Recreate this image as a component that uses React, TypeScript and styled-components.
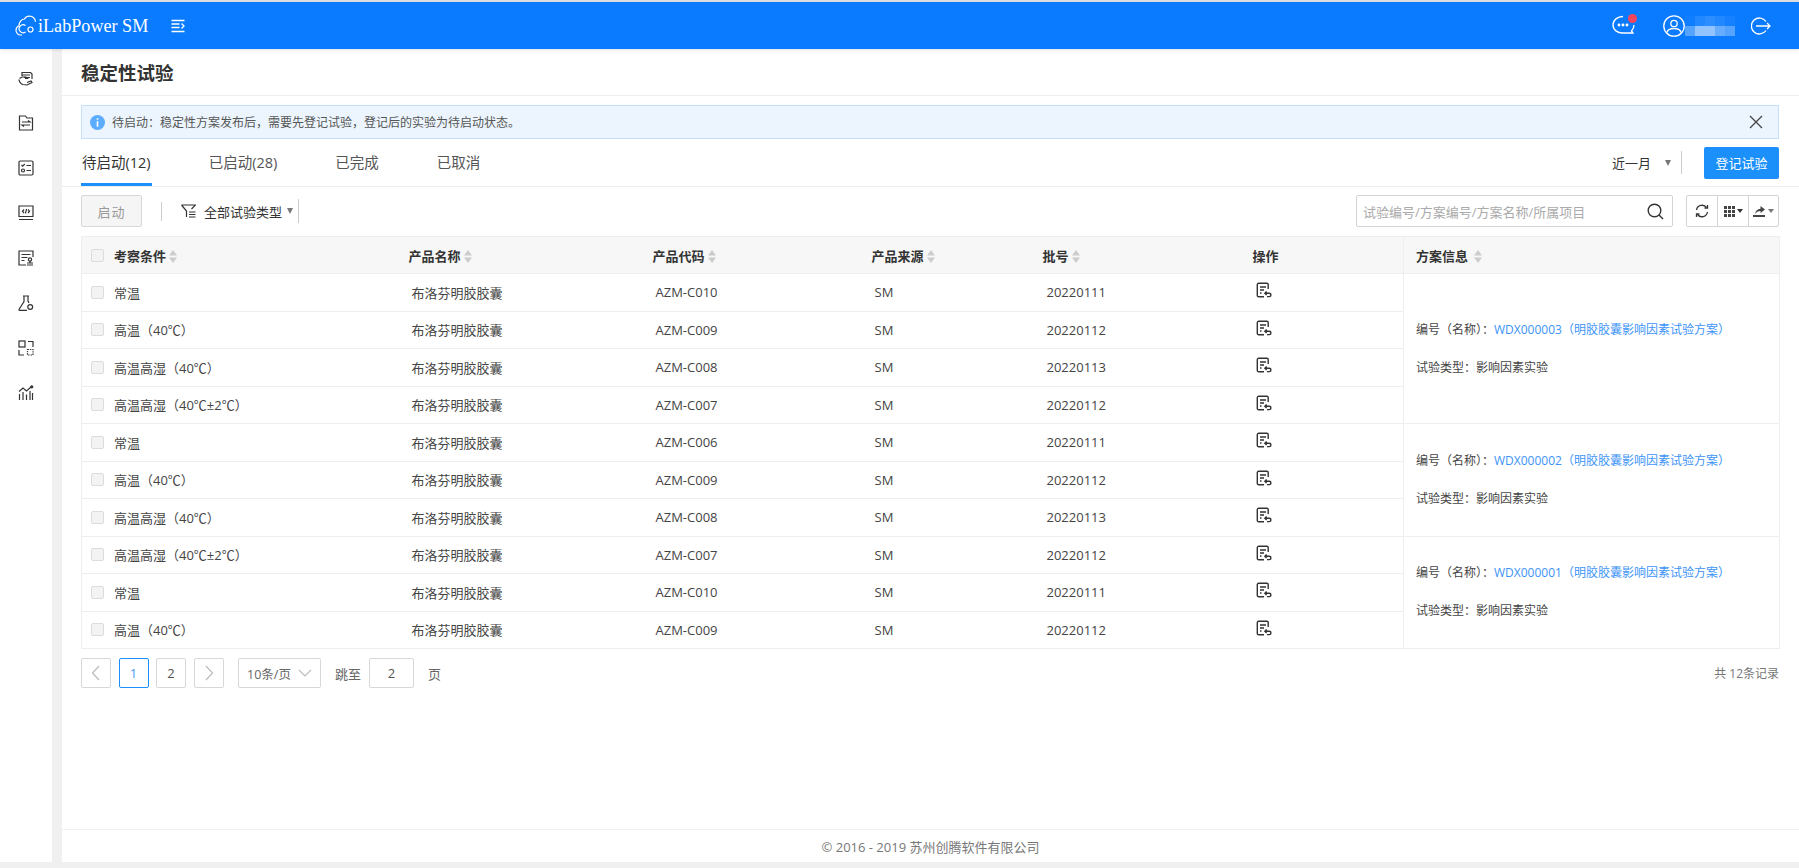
import { createGlobalStyle, styled } from 'styled-components';

const FONT = '"Open Sans", "Noto Sans CJK SC", sans-serif';

const GlobalStyle = createGlobalStyle`
  html, body {
    margin: 0;
    height: 100%;
    overflow: hidden;
  }
  body {
    font-family: ${FONT};
    font-size: 13px;
    color: #333;
    background: #f0f0f0;
  }
  * { box-sizing: border-box; }
`;

const Page = styled.div`
  height: 100vh;
  display: flex;
  flex-direction: column;
  padding-bottom: 6px;
`;

const Header = styled.header`
  flex: none;
  height: 49px;
  border-top: 2px solid #dedede;
  background: #0a7bff;
  display: flex;
  align-items: center;
  color: #fff;
  box-shadow: 0 1px 3px rgba(0, 0, 0, 0.12);
  z-index: 1;
`;

const Logo = styled.div`
  display: flex;
  align-items: center;
  margin-left: 15px;
  width: 156px;
`;

const LogoText = styled.span`
  font-family: "Liberation Serif", serif;
  font-size: 19.5px;
  line-height: 24px;
  margin-left: -1px;
  transform: scaleX(0.93);
  transform-origin: left center;
  white-space: nowrap;
`;

const HeaderRight = styled.div`
  margin-left: auto;
  display: flex;
  align-items: center;
  padding-right: 28px;
`;

const ChatWrap = styled.div`
  position: relative;
  width: 23px;
  height: 21px;
  margin-right: 28px;
`;

const RedDot = styled.span`
  position: absolute;
  top: -1px;
  right: -2px;
  width: 9px;
  height: 9px;
  border-radius: 50%;
  background: #f5455c;
`;

const NameBlur = styled.div`
  display: grid;
  grid-template-columns: repeat(5, 10px);
  grid-template-rows: 10px 10px;
  margin-right: 16px;
`;

const Blur = styled.span<{ $alpha: number }>`
  background: rgba(255, 255, 255, ${(p) => p.$alpha});
`;

const Main = styled.div`
  flex: 1;
  min-height: 0;
  display: flex;
`;

const Sidebar = styled.nav`
  flex: none;
  width: 52px;
  background: #fff;
  padding-top: 21px;
  display: flex;
  flex-direction: column;
  align-items: center;
  gap: 29px;
`;

const Content = styled.main`
  flex: 1;
  min-width: 0;
  margin-left: 10px;
  background: #fff;
  display: flex;
  flex-direction: column;
`;

const TitleBar = styled.div`
  flex: none;
  height: 47px;
  padding-left: 19px;
  display: flex;
  align-items: center;
  border-bottom: 1px solid #eee;
`;

const Title = styled.h1`
  margin: 0;
  font-size: 18.5px;
  font-weight: 700;
  color: #333;
`;

const Alert = styled.div`
  flex: none;
  height: 34px;
  margin: 9px 20px 0 19px;
  padding: 0 15px 0 8px;
  background: #ecf5fe;
  border: 1px solid #c3e1fb;
  display: flex;
  align-items: center;
  gap: 7px;
  font-size: 12px;
  color: #555;
`;

const CloseBox = styled.span`
  margin-left: auto;
  display: flex;
`;

const TabBar = styled.div`
  flex: none;
  height: 48px;
  padding: 0 20px 0 19px;
  border-bottom: 1px solid #eee;
  display: flex;
`;

const Tab = styled.div<{ $active?: boolean }>`
  height: 47px;
  margin-right: 56px;
  padding: 0 1px;
  display: flex;
  align-items: center;
  font-size: 14.5px;
  color: ${(p) => (p.$active ? '#333' : '#555')};
  border-bottom: 3px solid ${(p) => (p.$active ? '#1b8ffa' : 'transparent')};
`;

const TabRight = styled.div`
  margin-left: auto;
  display: flex;
  align-items: center;
`;

const RangeSelect = styled.div`
  display: flex;
  align-items: center;
  height: 23px;
  padding-right: 10px;
  border-right: 1px solid #ccc;
  margin-right: 22px;
  gap: 14px;
`;

const Caret = styled.i`
  display: inline-block;
  width: 0;
  height: 0;
  border-left: 3.5px solid transparent;
  border-right: 3.5px solid transparent;
  border-top: 6px solid #777;
`;

const PrimaryButton = styled.button`
  width: 75px;
  height: 32px;
  border: 0;
  border-radius: 2px;
  background: #1b8ffa;
  color: #fff;
  font: 13px ${FONT};
  padding: 0;
`;

const Section = styled.section`
  flex: 1;
  padding: 0 20px 0 19px;
`;

const Toolbar = styled.div`
  height: 32px;
  margin: 8px 0 9px;
  display: flex;
  align-items: center;
`;

const DisabledButton = styled.button`
  width: 61px;
  height: 32px;
  border: 1px solid #d8d8d8;
  border-radius: 2px;
  background: #f5f5f5;
  color: #999;
  font: 13px ${FONT};
  letter-spacing: 1px;
  padding: 0;
`;

const Divider = styled.span`
  width: 1px;
  height: 19px;
  background: #ccc;
  margin: 0 19px;
`;

const FilterSelect = styled.div`
  display: flex;
  align-items: center;
  height: 24px;
  border-right: 1px solid #ccc;
  padding-right: 5px;
`;

const FilterLabel = styled.span`
  margin: 0 5px 0 8px;
`;

const SearchBox = styled.div`
  margin-left: auto;
  width: 317px;
  height: 32px;
  border: 1px solid #d4d4d4;
  border-radius: 2px;
  display: flex;
  align-items: center;
  justify-content: space-between;
  padding: 0 8px 0 6px;
  color: #aaa;
`;

const ToolGroup = styled.div`
  margin-left: 13px;
  width: 93px;
  height: 32px;
  border: 1px solid #d4d4d4;
  border-radius: 2px;
  display: flex;
`;

const ToolButton = styled.div<{ $w: number }>`
  width: ${(p) => p.$w}px;
  display: flex;
  align-items: center;
  justify-content: center;
  gap: 2px;
  & + & { border-left: 1px solid #d4d4d4; }
`;

const SmallCaret = styled.i<{ $dark?: boolean }>`
  display: inline-block;
  width: 0;
  height: 0;
  border-left: 3px solid transparent;
  border-right: 3px solid transparent;
  border-top: 4px solid ${(p) => (p.$dark ? '#333' : '#777')};
`;

const Table = styled.table`
  width: 1698px;
  table-layout: fixed;
  border-collapse: collapse;
  border: 1px solid #eee;
`;

const Th = styled.th<{ $w: number; $pad?: number }>`
  width: ${(p) => p.$w}px;
  height: 37px;
  padding: 0 0 0 ${(p) => p.$pad ?? 3}px;
  background: #f7f7f7;
  border-bottom: 1px solid #eee;
  text-align: left;
  font-size: 13px;
  font-weight: 700;
  color: #333;
  white-space: nowrap;
`;

const InfoTh = styled(Th)`
  border-left: 1px solid #eee;
  padding-left: 12px;
`;

const Tr = styled.tr`
  height: 37.5px;
`;

const Td = styled.td<{ $pad?: number }>`
  padding: 0 0 0 ${(p) => p.$pad ?? 6}px;
  border-bottom: 1px solid #eee;
  white-space: nowrap;
  color: #444;
`;

const InfoCell = styled.td`
  padding: 0 0 0 12px;
  border-left: 1px solid #eee;
  border-bottom: 1px solid #eee;
  font-size: 12px;
  color: #444;
  vertical-align: middle;
`;

const InfoLine = styled.div`
  line-height: 20px;
  & + & { margin-top: 18px; }
`;

const InfoLink = styled.span`
  color: #3c93f7;
`;

const CheckCell = styled.div`
  display: flex;
  align-items: center;
  gap: 10px;
  padding-left: 9px;
`;

const Check = styled.span`
  flex: none;
  width: 13px;
  height: 13px;
  border: 1px solid #dcdcdc;
  border-radius: 2px;
  background: #f3f3f3;
`;

const SortMark = styled.svg`
  margin-left: 3px;
  vertical-align: -2px;
`;

const Pager = styled.div`
  height: 30px;
  margin-top: 9px;
  display: flex;
  align-items: center;
`;

const PageBtn = styled.div<{ $active?: boolean }>`
  width: 30px;
  height: 30px;
  margin-right: 7.5px;
  border: 1px solid ${(p) => (p.$active ? '#1b8ffa' : '#d8d8d8')};
  border-radius: 2px;
  color: ${(p) => (p.$active ? '#4a9bf5' : '#555')};
  display: flex;
  align-items: center;
  justify-content: center;
`;

const PageSize = styled.div`
  width: 83px;
  height: 30px;
  margin-left: 7px;
  padding: 0 8px;
  border: 1px solid #d8d8d8;
  border-radius: 2px;
  color: #666;
  display: flex;
  align-items: center;
  justify-content: space-between;
  font-size: 12.5px;
`;

const JumpLabel = styled.span`
  margin: 0 8px 0 14px;
  color: #666;
`;

const JumpInput = styled.div`
  width: 45px;
  height: 30px;
  border: 1px solid #d8d8d8;
  border-radius: 2px;
  display: flex;
  align-items: center;
  justify-content: center;
  color: #555;
`;

const Total = styled.span`
  margin-left: auto;
  font-size: 12px;
  color: #777;
`;

const Footer = styled.footer`
  flex: none;
  height: 33px;
  border-top: 1px solid #f0f0f0;
  display: flex;
  align-items: center;
  justify-content: center;
  color: #777;
`;

const stroke = { fill: 'none', stroke: '#333', strokeWidth: 1.2 };

const sideIcons = [
  <>
    <path d="M4 6V2.5h8.5L14 4v5" />
    <path d="M4 5h8M6 7.5h6" />
    <path d="M1.5 8.5 4 7h4l1.5 1.5H7M1 9.5c0 2 2 4.5 4 5l4 .5 5-2.5-1-1.5-4 1.5" />
  </>,
  <>
    <path d="M1.5 1h6l1.5 2h5.5v12h-13z" />
    <path d="M4 7h8L10 5.5M12 10H4l2 1.5" />
  </>,
  <>
    <rect x="1" y="1" width="14" height="14" rx="1.2" />
    <path d="m3.5 5 1.2 1.2L6.8 4M8.5 5.5h4.5M8.5 10.5h4.5" />
    <circle cx="5" cy="10.5" r="1.5" />
  </>,
  <>
    <path d="M1 1h14v10.5H1zM1 14.5h14" />
    <path d="M6 4.5 4.5 6.2 6 8M10 4.5l1.5 1.7L10 8M8.6 4 7.4 8.4" />
  </>,
  <>
    <path d="M15 7V1H1v14h7" />
    <path d="M3.5 4.5h9M3.5 7.5h6M3.5 10.5h3" />
    <circle cx="12" cy="9.5" r="1.6" />
    <path d="M12 11v1.5M9 13h6M9 15h6" />
  </>,
  <>
    <path d="M5 1h6M6 1v5.5L1 14.5c-.2.4 0 .8.5.8H9M10 1v5l1 2" />
    <circle cx="12.2" cy="12" r="2.4" />
  </>,
  <>
    <rect x="1" y="1" width="6" height="6" />
    <path d="M10 1.5h5V7M1 10v5h5" />
    <rect x="9.5" y="9.5" width="5.5" height="5.5" strokeDasharray="1.4 1" />
  </>,
  <>
    <path d="M1.5 15V9M5 15V7M8.5 15V9.5M12 15V6M14.5 15V8" />
    <path d="M1 6.5 5 3l3.5 3L13 2" />
    <circle cx="13.8" cy="1.8" r="1" fill="#333" />
  </>,
];

const SideIcon = ({ children }: { children: React.ReactNode }) => (
  <svg width="16" height="16" viewBox="0 0 16 16" {...stroke}>{children}</svg>
);

const ActionIcon = () => (
  <svg width="16" height="16" viewBox="0 0 16 16" fill="none" stroke="#333" strokeWidth="1.4">
    <path d="M8 14.7H2.6a1.3 1.3 0 0 1-1.3-1.3V2.6a1.3 1.3 0 0 1 1.3-1.3h8.3a1.3 1.3 0 0 1 1.3 1.3V7" />
    <path d="M4 5h6M4 8h4M4 11h1.5" />
    <path d="M9 11.2h4.2a1.6 1.6 0 0 1 0 3.4H11M10.6 9.5 8.9 11.2l1.7 1.7" />
  </svg>
);

const Sort = () => (
  <SortMark width="8" height="13" viewBox="0 0 8 13" fill="#ccc">
    <path d="M4 0 8 5.5H0zM0 7.5h8L4 13z" />
  </SortMark>
);

const ChevronLeft = () => (
  <svg width="10" height="16" viewBox="0 0 10 16" fill="none" stroke="#bbb" strokeWidth="1.2"><path d="M8 1 1.5 8 8 15" /></svg>
);

const ChevronRight = () => (
  <svg width="10" height="16" viewBox="0 0 10 16" fill="none" stroke="#bbb" strokeWidth="1.2"><path d="m2 1 6.5 7L2 15" /></svg>
);

const blurCells = [0.02, 0.1, 0.14, 0.1, 0.05, 0.3, 0.55, 0.55, 0.38, 0.3];

const groups = [
  {
    no: 'WDX000003',
    rows: [
      ['常温', 'AZM-C010', '20220111'],
      ['高温（40℃）', 'AZM-C009', '20220112'],
      ['高温高湿（40℃）', 'AZM-C008', '20220113'],
      ['高温高湿（40℃±2℃）', 'AZM-C007', '20220112'],
    ],
  },
  {
    no: 'WDX000002',
    rows: [
      ['常温', 'AZM-C006', '20220111'],
      ['高温（40℃）', 'AZM-C009', '20220112'],
      ['高温高湿（40℃）', 'AZM-C008', '20220113'],
    ],
  },
  {
    no: 'WDX000001',
    rows: [
      ['高温高湿（40℃±2℃）', 'AZM-C007', '20220112'],
      ['常温', 'AZM-C010', '20220111'],
      ['高温（40℃）', 'AZM-C009', '20220112'],
    ],
  },
];

const App = () => {
  return (
    <Page>
      <GlobalStyle />
      <Header>
        <Logo>
          <svg width="24" height="22" viewBox="0 0 24 22" fill="none" stroke="#fff" strokeWidth="1.2">
            <path d="M7 20H5.5C3 20 1 17.8 1 15.2c0-2 1.200-3.700 3-4.400C4 6.500 6.800 4 9.500 4c1-1.800 3-2.800 5-2.800 3.200 0 5.800 2.400 6 5.500" />
            <path d="M10.500 10.500a4 4 0 1 0 0 6.500" />
            <circle cx="15.500" cy="14.500" r="2.500" />
          </svg>
          <LogoText>iLabPower SM</LogoText>
        </Logo>
        <svg width="14" height="14" viewBox="0 0 14 14" fill="none" stroke="#fff" strokeWidth="1.3">
          <path d="M.5 1.500h13M.5 5h8M.5 8.500h8M.5 12.500h13" />
          <path d="m10.500 4.500 2.500 2.500-2.500 2.500" />
        </svg>
        <HeaderRight>
          <ChatWrap>
            <svg width="23" height="21" viewBox="0 0 23 21" fill="none" stroke="#fff" strokeWidth="1.300">
              <path d="M11 1.500C5.500 1.500 1 5 1 10s4.500 8 9.500 8H21l-1.500-2c1.500-1.500 2.500-3.500 2.500-6" />
              <circle cx="7" cy="10" r=".8" fill="#fff" />
              <circle cx="11" cy="10" r=".8" fill="#fff" />
              <circle cx="15" cy="10" r=".8" fill="#fff" />
            </svg>
            <RedDot />
          </ChatWrap>
          <svg width="22" height="22" viewBox="0 0 22 22" fill="none" stroke="#fff" strokeWidth="1.300">
            <circle cx="11" cy="11" r="10.200" />
            <circle cx="11" cy="8.500" r="3.200" />
            <path d="M4 17.500c.5-2.500 3-4 7-4s6.500 1.500 7 4" />
          </svg>
          <NameBlur>
            {blurCells.map((a, i) => <Blur key={i} $alpha={a} />)}
          </NameBlur>
          <svg width="20" height="18" viewBox="0 0 20 18" fill="none" stroke="#fff" strokeWidth="1.300">
            <path d="M15 4.500A8 8 0 1 0 15 13.500" />
            <path d="M5 9h14M16 6l3 3-3 3" />
          </svg>
        </HeaderRight>
      </Header>

      <Main>
        <Sidebar>
          {sideIcons.map((icon, i) => <SideIcon key={i}>{icon}</SideIcon>)}
        </Sidebar>

        <Content>
          <TitleBar>
            <Title>稳定性试验</Title>
          </TitleBar>

          <Alert>
            <svg width="15" height="15" viewBox="0 0 15 15">
              <circle cx="7.500" cy="7.500" r="7.500" fill="#5cacff" />
              <path d="M7.500 3.200v1.600M7.500 6.200v5.500" stroke="#fff" strokeWidth="1.600" />
            </svg>
            待启动：稳定性方案发布后，需要先登记试验，登记后的实验为待启动状态。
            <CloseBox>
              <svg width="14" height="14" viewBox="0 0 14 14" stroke="#444" strokeWidth="1.300">
                <path d="m1 1 12 12M13 1 1 13" />
              </svg>
            </CloseBox>
          </Alert>

          <TabBar>
            <Tab $active>待启动(12)</Tab>
            <Tab>已启动(28)</Tab>
            <Tab>已完成</Tab>
            <Tab>已取消</Tab>
            <TabRight>
              <RangeSelect>
                近一月
                <Caret />
              </RangeSelect>
              <PrimaryButton>登记试验</PrimaryButton>
            </TabRight>
          </TabBar>

          <Section>
            <Toolbar>
              <DisabledButton>启动</DisabledButton>
              <Divider />
              <FilterSelect>
                <svg width="15" height="14" viewBox="0 0 15 14" fill="none" stroke="#333" strokeWidth="1.200">
                  <path d="M.5 1h14l-4 4M.5 1l5 6v6" />
                  <path d="M8 8h6.500M8 10.500h6.500M8 13h6.500" />
                </svg>
                <FilterLabel>全部试验类型</FilterLabel>
                <Caret />
              </FilterSelect>
              <SearchBox>
                试验编号/方案编号/方案名称/所属项目
                <svg width="17" height="17" viewBox="0 0 17 17" fill="none" stroke="#333" strokeWidth="1.400">
                  <circle cx="7.500" cy="7.500" r="6.300" />
                  <path d="m12 12 4 4" />
                </svg>
              </SearchBox>
              <ToolGroup>
                <ToolButton $w={30}>
                  <svg width="14" height="14" viewBox="0 0 14 14" fill="none" stroke="#333" strokeWidth="1.300">
                    <path d="M1.500 6a5.600 5.600 0 0 1 10-2.500M12.500 8a5.600 5.600 0 0 1-10 2.500" />
                    <path d="M12.500 1v3h-3M1.500 13v-3h3" />
                  </svg>
                </ToolButton>
                <ToolButton $w={31}>
                  <svg width="11" height="11" viewBox="0 0 11 11" fill="#444">
                    <path d="M0 0h3v3H0zM4 0h3v3H4zM8 0h3v3H8zM0 4h3v3H0zM4 4h3v3H4zM8 4h3v3H8zM0 8h3v3H0zM4 8h3v3H4zM8 8h3v3H8z" />
                  </svg>
                  <SmallCaret $dark />
                </ToolButton>
                <ToolButton $w={30}>
                  <svg width="13" height="12" viewBox="0 0 13 12" fill="#444">
                    <path d="M0 10h12v2H0zM2 9c.5-3 2.500-5 5.500-5.200V1L12 4.500 7.500 8V6C5 6 3.500 7 2 9z" />
                  </svg>
                  <SmallCaret />
                </ToolButton>
              </ToolGroup>
            </Toolbar>

            <Table>
              <thead>
                <tr>
                  <Th $w={324} $pad={0}>
                    <CheckCell><Check /><span>考察条件<Sort /></span></CheckCell>
                  </Th>
                  <Th $w={244}>产品名称<Sort /></Th>
                  <Th $w={219}>产品代码<Sort /></Th>
                  <Th $w={171}>产品来源<Sort /></Th>
                  <Th $w={210}>批号<Sort /></Th>
                  <Th $w={154}>操作</Th>
                  <InfoTh $w={376}>方案信息 <Sort /></InfoTh>
                </tr>
              </thead>
              <tbody>
                {groups.map((group) => group.rows.map((row, i) => (
                  <Tr key={group.no + i}>
                    <Td $pad={0}>
                      <CheckCell><Check /><span>{row[0]}</span></CheckCell>
                    </Td>
                    <Td>布洛芬明胶胶囊</Td>
                    <Td>{row[1]}</Td>
                    <Td>SM</Td>
                    <Td $pad={7}>{row[2]}</Td>
                    <Td><ActionIcon /></Td>
                    {i === 0 && (
                      <InfoCell rowSpan={group.rows.length}>
                        <InfoLine>
                          编号（名称）：<InfoLink>{group.no}（明胶胶囊影响因素试验方案）</InfoLink>
                        </InfoLine>
                        <InfoLine>试验类型：影响因素实验</InfoLine>
                      </InfoCell>
                    )}
                  </Tr>
                )))}
              </tbody>
            </Table>

            <Pager>
              <PageBtn><ChevronLeft /></PageBtn>
              <PageBtn $active>1</PageBtn>
              <PageBtn>2</PageBtn>
              <PageBtn><ChevronRight /></PageBtn>
              <PageSize>
                10条/页
                <svg width="14" height="8" viewBox="0 0 14 8" fill="none" stroke="#bbb" strokeWidth="1.200"><path d="m1 1 6 6 6-6" /></svg>
              </PageSize>
              <JumpLabel>跳至</JumpLabel>
              <JumpInput>2</JumpInput>
              <JumpLabel>页</JumpLabel>
              <Total>共 12条记录</Total>
            </Pager>
          </Section>

          <Footer>© 2016 - 2019 苏州创腾软件有限公司</Footer>
        </Content>
      </Main>
    </Page>
  );
};

export default App;
